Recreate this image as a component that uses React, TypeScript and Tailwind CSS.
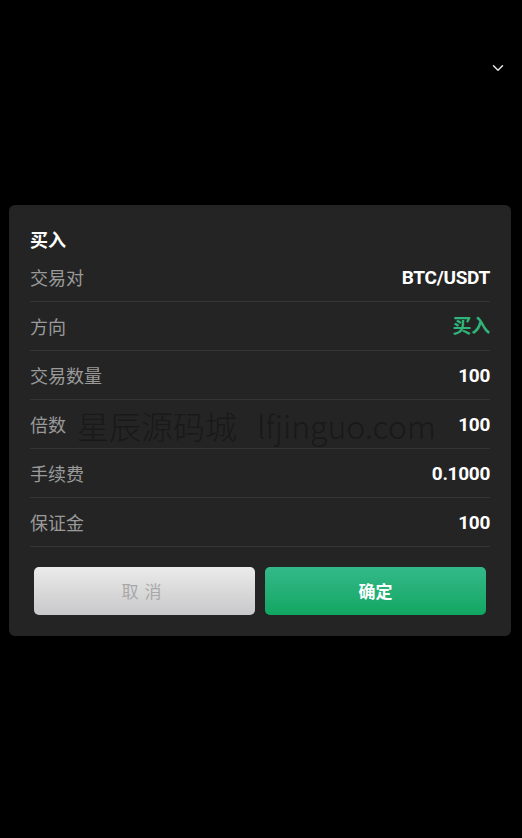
import { ChevronDown } from "lucide-react"

const rows = [
  { label: "交易对", value: "BTC/USDT" },
  { label: "方向", value: "买入", green: true },
  { label: "交易数量", value: "100" },
  { label: "倍数", value: "100" },
  { label: "手续费", value: "0.1000" },
  { label: "保证金", value: "100" },
]

export default function App() {
  return (
    <div
      className="min-h-[838px] w-full bg-black flex flex-col"
      style={{ fontFamily: '"Noto Sans CJK SC", "Noto Sans", sans-serif' }}
    >
      <div className="flex justify-end pt-[59px] pr-[15px]">
        <ChevronDown className="h-[18px] w-[18px] text-[#e5e5e5]" strokeWidth={2} />
      </div>
      <div className="ml-[9px] mr-[11px] mt-[128px] rounded-[6px] bg-[#242424] px-[21px] pt-[21px] pb-[21px] relative">
        <h2 className="text-[18px] font-bold text-white leading-[26px]">买入</h2>
        <div className="mt-[1px]">
          {rows.map((r) => (
            <div
              key={r.label}
              className="flex h-[49px] items-center justify-between border-b border-[#353535]"
            >
              <span className="text-[18px] text-[#9a9a9a]">{r.label}</span>
              <span
                className={`mt-[3px] text-[19px] font-bold tracking-[-0.3px] ${r.green ? "text-[#2fb579]" : "text-white"}`}
                style={{ fontFamily: 'Roboto, "Noto Sans CJK SC", sans-serif' }}
              >
                {r.value}
              </span>
            </div>
          ))}
        </div>
        <div className="pointer-events-none absolute left-[68px] top-[196px] text-[32px] font-light text-[#191919] whitespace-nowrap">
          星辰源码城<span className="ml-[20px]">lfjinguo.com</span>
        </div>
        <div className="mt-[20px] flex gap-[10px] px-[4px]">
          <button className="flex-1 h-[48px] rounded-[5px] bg-gradient-to-b from-[#ebebeb] to-[#c8c8ca] text-[17px] text-[#a8a8a8] tracking-[6px]">
            取消
          </button>
          <button className="flex-1 h-[48px] rounded-[5px] bg-gradient-to-b from-[#33b98a] to-[#0fa661] text-[17px] font-bold text-white">
            确定
          </button>
        </div>
      </div>
    </div>
  )
}
